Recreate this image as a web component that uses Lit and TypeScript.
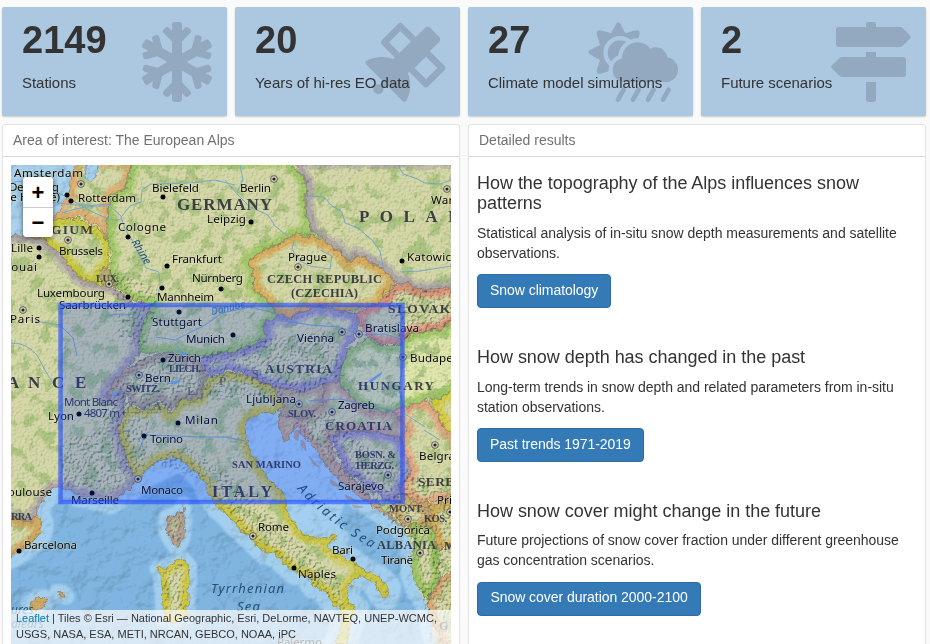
import { LitElement, html, svg, css } from "lit";
import { customElement } from "lit/decorators.js";

const ICONS: Record<string, { w: number; body: unknown }> = {
  snow: {
    w: 70,
    body: svg`<svg viewBox="0 0 448 512"><path d="M440.3 345.2l-33.8-19.5 26-7c8.2-2.2 13.1-10.7 10.9-18.9l-4-14.9c-2.2-8.2-10.7-13.1-18.9-10.9l-70.8 19-63.9-37 63.8-36.9 70.8 19c8.2 2.2 16.7-2.7 18.9-10.9l4-14.9c2.2-8.2-2.7-16.7-10.9-18.9l-26-7 33.8-19.5c7.4-4.3 9.9-13.7 5.7-21.1L430.4 119c-4.3-7.4-13.7-9.9-21.1-5.7l-33.8 19.5 7-26c2.2-8.2-2.7-16.7-10.9-18.9l-14.9-4c-8.2-2.2-16.7 2.7-18.9 10.9l-19 70.8-62.8 36.2v-77.5l53.7-53.7c6.2-6.2 6.2-16.4 0-22.6l-11.3-11.3c-6.2-6.2-16.4-6.2-22.6 0L256 56.4V16c0-8.8-7.2-16-16-16h-32c-8.8 0-16 7.2-16 16v40.4l-19.7-19.7c-6.2-6.2-16.4-6.2-22.6 0L138.3 48c-6.3 6.2-6.3 16.4 0 22.6l53.7 53.7v77.5l-62.8-36.2-19-70.8c-2.2-8.2-10.7-13.1-18.9-10.9l-14.9 4c-8.2 2.2-13.1 10.7-10.9 18.9l7 26-33.8-19.5c-7.4-4.3-16.8-1.7-21.1 5.7L2.1 145.7c-4.3 7.4-1.7 16.8 5.7 21.1l33.8 19.5-26 7c-8.3 2.2-13.2 10.7-11 19l4 14.9c2.2 8.2 10.7 13.1 18.9 10.9l70.8-19 63.8 36.9-63.8 36.9-70.8-19c-8.2-2.2-16.7 2.7-18.9 10.9l-4 14.9c-2.2 8.2 2.7 16.7 10.9 18.9l26 7-33.8 19.6c-7.4 4.3-9.9 13.7-5.7 21.1l15.5 26.8c4.3 7.4 13.7 9.9 21.1 5.7l33.8-19.5-7 26c-2.2 8.2 2.7 16.7 10.9 18.9l14.9 4c8.2 2.2 16.7-2.7 18.9-10.9l19-70.8 62.8-36.2v77.5l-53.7 53.7c-6.3 6.2-6.3 16.4 0 22.6l11.3 11.3c6.2 6.2 16.4 6.2 22.6 0l19.7-19.7V496c0 8.8 7.2 16 16 16h32c8.8 0 16-7.2 16-16v-40.4l19.7 19.7c6.2 6.2 16.4 6.2 22.6 0l11.3-11.3c6.2-6.2 6.2-16.4 0-22.6L256 387.7v-77.5l62.8 36.2 19 70.8c2.2 8.2 10.7 13.1 18.9 10.9l14.9-4c8.2-2.2 13.1-10.7 10.9-18.9l-7-26 33.8 19.5c7.4 4.3 16.8 1.7 21.1-5.7l15.5-26.8c4.3-7.3 1.8-16.8-5.6-21z"/></svg>`,
  },
  satellite: {
    w: 80,
    body: svg`<svg viewBox="0 0 240 240">
      <path d="M180 18Q188 11 196 18L222 44Q229 52 222 60L128 154L84 112Z"/>
      <path d="M106 13L154 61L106 109L58 61ZM183 90L231 138L183 186L135 138Z" fill="none" stroke="currentColor" stroke-width="20" stroke-linejoin="round"/>
      <path d="M3 117C32 101 68 102 90 114L128 152C140 180 136 214 125 235Q119 243 112 236L3 127Q-2 122 3 117Z"/>
      <circle cx="40" cy="202" r="15"/><path d="M38 195L65 168L75 178L48 205Z"/></svg>`,
  },
  weather: {
    w: 90,
    body: svg`<svg viewBox="0 0 270 240">
      <path d="M86 4Q91 -3 96 4L112 34L143 25Q156 24 155 34L148 66L120 160L62 148L36 156Q25 156 26 145L36 114L4 96Q-2 90 4 85L36 69L26 36Q25 25 36 25L69 34Z"/>
      <circle class="gap" cx="96" cy="92" r="50"/><circle cx="96" cy="92" r="37"/>
      <g class="halo"><circle cx="149" cy="108" r="47"/><circle cx="110" cy="144" r="36"/><circle cx="204" cy="110" r="34"/><circle cx="233" cy="143" r="37"/></g>
      <g><circle cx="149" cy="108" r="47"/><circle cx="110" cy="144" r="36"/><circle cx="204" cy="110" r="34"/><circle cx="233" cy="143" r="37"/><path d="M108 110H234V180H108Z"/></g>
      <path d="M107 203L90 233M152 203L135 233M197 203L180 233M242 203L225 233" fill="none" stroke="currentColor" stroke-width="14" stroke-linecap="round"/></svg>`,
  },
  signs: {
    w: 80,
    body: svg`<svg viewBox="0 0 240 240"><path d="M105 15V6Q105 0 111 0H129Q135 0 135 6V15H205Q211 15 215 19L238 41Q242 45 238 49L215 71Q211 75 205 75H24Q15 75 15 66V24Q15 15 24 15ZM105 90H135V105H216Q225 105 225 114V156Q225 165 216 165H35Q29 165 25 161L2 139Q-2 135 2 131L25 109Q29 105 35 105H105ZM105 180H135V232Q135 240 127 240H113Q105 240 105 232Z"/></svg>`,
  },
};

@customElement("value-box")
class ValueBox extends LitElement {
  static properties = { value: {}, caption: {}, icon: {} };
  declare value: string;
  declare caption: string;
  declare icon: string;
  static styles = css`
    :host { display: block; position: relative; box-sizing: border-box; height: 109px; padding: 11px 20px; border-radius: 2px; background: #acc7e0; box-shadow: 0 1px 2px rgba(0, 0, 0, 0.2); color: #333; overflow: hidden; }
    .value { position: relative; font-size: 38px; font-weight: 700; line-height: 44px; }
    .caption { position: relative; font-size: 15px; line-height: 20px; margin-top: 11px; white-space: nowrap; letter-spacing: -0.03px; }
    .icon { position: absolute; right: 15px; top: 15px; height: 80px; color: #92a9c0; }
    .icon svg { display: block; height: 80px; width: 100%; fill: currentColor; overflow: visible; }
    .icon .gap { fill: #acc7e0; }
    .icon .halo { fill: #acc7e0; stroke: #acc7e0; stroke-width: 24; }
  `;
  render() {
    const icon = ICONS[this.icon];
    return html`<div class="icon" style="width:${icon.w}px">${icon.body}</div>
      <div class="value">${this.value}</div>
      <div class="caption">${this.caption}</div>`;
  }
}

type Country = { id: string; band: string; pts: string };

const GERMANY_CZ = "292,165 300,173 307,183 305,200 308,217 312,232 307,238 297,233 280,243 258,253 247,262 253,270 253,287 268,302";
const ITALY_COAST =
  "137,480 147,470 160,460 177,457 190,467 203,480 208,493 217,507 225,513 238,527 252,540 265,553 275,555 288,567 295,573 308,577 313,587 325,592 332,603 340,610 342,627 334,644 347,644 350,628 357,608 348,603 347,590 355,578 365,577 375,585 382,597 387,598 389,587 380,577 365,570 352,560 335,553 327,545 337,538 332,535 322,538 305,535 292,520 287,507 282,490 268,478 253,457 248,443 245,427 250,418 260,413 276,414";
const COUNTRIES: Country[] = [
  { id: "fr", band: "#a69aa6", pts: "0,237 27,235 43,240 60,253 70,267 83,280 103,285 117,289 133,302 155,305 143,323 138,343 140,353 125,370 112,385 105,397 125,393 124,412 118,430 124,450 128,465 138,478 133,487 117,498 110,502 90,497 77,495 67,490 53,488 43,500 37,513 30,522 0,514" },
  { id: "es", band: "#d09d50", pts: "0,514 30,522 37,513 42,524 40,534 30,545 17,553 0,562" },
  { id: "nl", band: "#e0a566", pts: "75,160 132,160 130,170 128,183 123,190 115,193 108,200 108,217 107,240 100,228 80,216 50,222 68,195" },
  { id: "be", band: "#cbc829", pts: "27,234 50,222 67,218 80,218 100,230 110,243 108,267 100,273 103,285 83,280 70,267 60,253 43,240" },
  { id: "lu", band: "#b09f5e", pts: "104,268 112,273 117,287 103,286 100,277" },
  { id: "de", band: "#96c558", pts: `132,160 130,170 128,183 123,190 115,193 108,200 108,217 107,240 112,253 108,270 117,287 133,300 155,305 150,310 143,323 138,343 140,353 163,352 180,355 203,356 235,352 258,343 267,335 263,327 277,315 268,302 ${GERMANY_CZ.split(" ").reverse().join(" ")} 292,160` },
  { id: "pl", band: "#a49aa8", pts: "292,160 300,173 307,183 305,200 308,217 312,232 330,245 338,250 348,263 357,255 372,263 388,273 395,284 405,283 420,290 460,288 460,160" },
  { id: "cz", band: "#dba54d", pts: "247,262 258,253 280,243 297,233 307,238 312,234 330,245 338,250 348,263 357,255 372,263 388,273 395,284 385,293 380,302 372,307 345,312 320,306 300,312 290,318 277,314 268,302 253,287 253,270" },
  { id: "sk", band: "#dd8570", pts: "380,302 395,285 405,283 420,290 460,288 460,318 438,330 412,333 398,345 382,345 367,337 358,323 357,313" },
  { id: "at", band: "#948cbe", pts: "203,356 235,352 258,343 267,335 263,327 277,315 290,318 300,312 320,306 345,312 357,313 358,328 348,350 340,370 338,382 325,384 300,391 270,386 250,376 230,370 210,376 200,368" },
  { id: "ch", band: "#b29d7f", pts: "163,352 145,358 125,370 112,385 105,397 125,393 130,405 145,408 160,400 170,412 180,400 200,398 207,376 200,360 180,355" },
  { id: "it", band: "#cac22d", pts: `${ITALY_COAST} 285,405 270,386 250,376 230,372 207,378 200,398 180,400 170,414 160,402 145,410 130,407 124,412 118,430 124,450 130,468` },
  { id: "si", band: "#b59d80", pts: "270,386 300,391 325,384 322,405 303,418 278,415 285,405" },
  { id: "hr", band: "#c4a084", pts: "338,382 355,400 370,411 395,412 407,430 400,438 370,431 345,431 330,436 335,460 365,490 402,527 382,512 358,497 342,482 328,470 318,453 307,440 297,427 285,443 278,425 278,415 303,418 322,405 325,384" },
  { id: "hu", band: "#96c25c", pts: "348,350 367,338 382,346 398,346 412,334 438,330 460,318 460,385 440,398 425,400 400,408 395,412 370,411 355,400 338,382 340,370" },
  { id: "ro", band: "#d6cc2c", pts: "460,385 440,398 428,401 438,413 446,430 460,440" },
  { id: "ba", band: "#9a8cbf", pts: "330,436 345,431 370,431 400,438 405,455 411,470 400,490 394,506 370,490 345,470" },
  { id: "rs", band: "#e69a78", pts: "400,408 425,400 438,413 446,430 460,440 460,500 440,500 420,505 400,490 411,470 405,455 400,438 407,430 395,412" },
  { id: "me", band: "#c39c62", pts: "400,490 420,505 432,510 427,525 412,530 402,527 392,512" },
  { id: "xk", band: "#d9a54c", pts: "420,505 460,500 460,545 438,550 432,527 427,525 432,510" },
  { id: "al", band: "#90c052", pts: "410,522 432,527 438,550 440,577 428,600 417,586 412,573 413,547" },
  { id: "gr", band: "#d9a06a", pts: "428,600 440,577 460,570 460,650 445,650 428,612" },
  { id: "co", band: "#a8948f", pts: "183,503 185,520 183,537 178,550 170,540 165,530 167,517 181,512" },
  { id: "sd", band: "#cdc52c", pts: "157,568 167,567 182,557 190,567 188,603 187,617 173,623 163,620 162,590 160,577" },
  { id: "ml", band: "#cf9a55", pts: "28,603 38,597 47,597 45,607 37,611 30,607" },
  { id: "mn", band: "#cf9a55", pts: "56,592 63,592 67,597 60,596" },
];

const MAINLAND =
  "0,237 27,235 50,222 68,195 77,160 460,160 460,650 438,650 428,612 427,603 418,590 412,573 413,547 402,527 382,512 358,497 342,482 328,470 318,453 307,440 297,427 285,443 278,425 276,414 260,413 220,430 203,478 190,467 177,457 160,460 147,470 133,487 117,498 110,502 90,497 77,495 67,490 53,488 43,500 37,513 42,524 40,534 30,545 17,553 0,562";

/* x, y, text, rendered length */
type Label = [number, number, string, number];
const CITIES: Label[] = [
  [14, 177, "Amsterdam", 69], [78, 202, "Rotterdam", 58], [9, 191, "Den Haag", 50], [-7, 201, "(The Hague)", 67],
  [11, 252, "Lille", 22], [59, 255, "Brussels", 44], [2, 271, "Douai", 35], [152, 192, "Bielefeld", 47], [240, 192, "Berlin", 31],
  [118, 231, "Cologne", 48], [207, 223, "Leipzig", 39], [172, 263, "Frankfurt", 50], [192, 282, "Nürnberg", 51],
  [37, 297, "Luxembourg", 68], [157, 301, "Mannheim", 57], [59, 309, "Saarbrücken", 67], [288, 261, "Prague", 39],
  [431, 204, "Warsaw", 44], [407, 261, "Katowice", 51], [10, 323, "Paris", 30], [152, 326, "Stuttgart", 50],
  [186, 343, "Munich", 39], [297, 342, "Vienna", 37], [365, 332, "Bratislava", 54], [168, 362, "Zürich", 33],
  [145, 382, "Bern", 26], [410, 362, "Budapest", 53], [246, 403, "Ljubljana", 50], [338, 409, "Zagreb", 37],
  [48, 420, "Lyon", 26], [185, 424, "Milan", 33], [150, 443, "Torino", 33], [419, 460, "Belgrade", 50],
  [2, 496, "Toulouse", 50], [71, 504, "Marseille", 48], [141, 494, "Monaco", 42], [338, 490, "Sarajevo", 46],
  [24, 549, "Barcelona", 53], [258, 531, "Rome", 31], [332, 554, "Bari", 21], [298, 578, "Naples", 38],
  [376, 534, "Podgorica", 54], [381, 564, "Tiranë", 32], [437, 504, "Pristina", 42],
];
/* x, y, text, rendered length, font size */
const NAMES: [number, number, string, number, number][] = [
  [177, 210, "GERMANY", 95, 17], [359, 222, "POLAND", 124, 17], [51, 234, "GIUM", 42, 13.5], [96, 282, "LUX.", 23, 10.5],
  [267, 283, "CZECH REPUBLIC", 115, 12.5], [291, 297, "(CZECHIA)", 67, 12.5], [388, 313, "SLOVAKIA", 80, 13.5],
  [265, 373, "AUSTRIA", 67, 13], [358, 390, "HUNGARY", 76, 13], [169, 372, "LIECH.", 32, 10],
  [126, 392, "SWITZ.", 34, 10.5], [288, 417, "SLOV.", 28, 10.5], [325, 430, "CROATIA", 67, 13],
  [355, 458, "BOSN. &", 41, 10.5], [356, 469, "HERZG.", 38, 10.5], [232, 468, "SAN MARINO", 69, 10.5],
  [212, 497, "ITALY", 60, 16], [418, 486, "SERBIA", 52, 13.5], [389, 512, "MONT.", 35, 10.5], [424, 522, "KOS.", 23, 10.5],
  [377, 549, "ALBANIA", 59, 12.5], [444, 550, "MACED.", 50, 12], [11, 520, "RRA", 21, 10.5], [439, 630, "GREECE", 60, 12],
];
const DOTS = [[67, 195], [71, 201], [163, 197], [128, 237], [251, 222], [39, 248], [39, 257], [167, 266], [162, 288], [221, 289], [128, 297], [402, 261], [179, 312], [233, 335], [163, 360], [79, 414], [178, 423], [144, 436], [92, 493], [19, 551], [294, 568], [353, 559]];
const CAPITALS = [[81, 184], [68, 240], [274, 179], [447, 189], [298, 267], [109, 284], [23, 310], [342, 332], [359, 334], [403, 357], [139, 375], [299, 404], [332, 412], [435, 445], [388, 475], [138, 479], [253, 536], [408, 519], [420, 553], [450, 512]];
const RIVERS = [
  "M11 183Q30 175 75 202T122 216L130 206L141 202L142 190L151 184L190 183L215 180L235 185",
  "M48 201Q80 208 108 204L121 216Q124 230 132 240L146 268L159 272L160 285L156 305M62 213Q85 205 107 206",
  "M225 180L238 195L250 207L268 215L275 226L290 238M240 165L243 180L237 192",
  "M308 196L324 197L331 205L342 212L345 223L358 228L373 241L380 251L384 271M451 266L420 271L400 272",
  "M398 165L403 174L415 178L425 183L440 184L451 180M294 240L292 249L300 261L310 266L330 269L332 256L320 250",
  "M11 343Q25 342 37 355L46 372L56 388M35 321L60 325L73 338L77 356M105 317L115 314L145 315",
  "M156 337L175 340L205 325L222 313L250 307L275 313L287 321L310 325L340 327L360 335L385 334L402 340L404 356L399 390L405 414L425 427",
  "M139 450L145 435L176 436L200 437L225 437L245 441M398 414L390 410L340 399L308 401M424 430L440 440",
];

@customElement("alps-map")
class AlpsMap extends LitElement {
  static styles = css`
    :host { display: block; position: relative; height: 479px; overflow: hidden; background: #82b5de; }
    svg { display: block; width: 440px; height: 479px; }
    .city { font: 11.6px "Noto Sans", sans-serif; fill: #050505; paint-order: stroke; stroke: rgba(235, 238, 200, 0.4); stroke-width: 1.2px; }
    .name { font-family: "Liberation Serif", serif; font-weight: 700; fill: #3d3e43; }
    .alps { opacity: 0.6; font-size: 12px; }
    .water { font-family: "Noto Sans", sans-serif; font-style: italic; fill: #245079; }
    .peak { font: 11.5px "Noto Sans", sans-serif; fill: #333948; }
    .blend { mix-blend-mode: multiply; }
    .zoom { position: absolute; left: 12px; top: 12px; width: 30px; border-radius: 4px; background: #fff; box-shadow: 0 1px 5px rgba(0, 0, 0, 0.6); overflow: hidden; }
    .zoom button { display: block; width: 30px; height: 30px; padding: 0; border: 0; background: #fff; font: 700 22px/29px "Liberation Sans", Arial, sans-serif; color: #000; }
    .zoom button + button { border-top: 1px solid #ccc; }
    .credit { position: absolute; left: 0; right: 0; bottom: 0; box-sizing: border-box; height: 34px; padding: 1px 0 0 5px; background: rgba(255, 255, 255, 0.7); font: 11px/15.7px "Liberation Sans", Arial, sans-serif; color: #333; white-space: nowrap; }
    .credit a { color: #0078a8; }
  `;
  render() {
    return html`<svg viewBox="11 165 440 479">
        <defs>
          <filter id="rough" x="0" y="150" width="470" height="500" filterUnits="userSpaceOnUse" color-interpolation-filters="sRGB">
            <feTurbulence type="fractalNoise" baseFrequency="0.16" numOctaves="3" seed="8" />
            <feDisplacementMap in="SourceGraphic" scale="8" xChannelSelector="R" yChannelSelector="G" />
          </filter>
          <filter id="soft"><feGaussianBlur stdDeviation="1.1" /></filter>
          <filter id="relief" x="0" y="150" width="470" height="500" filterUnits="userSpaceOnUse" color-interpolation-filters="sRGB">
            <feTurbulence type="fractalNoise" baseFrequency="0.38" numOctaves="2" seed="3" result="n" />
            <feDiffuseLighting in="n" surfaceScale="3" diffuseConstant="1.3" lighting-color="#fff"><feDistantLight azimuth="225" elevation="52" /></feDiffuseLighting>
            <feComposite in2="SourceAlpha" operator="in" />
          </filter>
          <filter id="seabed" x="0" y="150" width="470" height="500" filterUnits="userSpaceOnUse" color-interpolation-filters="sRGB">
            <feTurbulence type="fractalNoise" baseFrequency="0.05" numOctaves="4" seed="12" />
            <feDiffuseLighting surfaceScale="6" diffuseConstant="1.2" lighting-color="#fff"><feDistantLight azimuth="225" elevation="58" /></feDiffuseLighting>
          </filter>
          <filter id="forest" x="0" y="150" width="470" height="500" filterUnits="userSpaceOnUse" color-interpolation-filters="sRGB">
            <feTurbulence type="fractalNoise" baseFrequency="0.07" numOctaves="4" seed="21" />
            <feColorMatrix values="0 0 0 0 0.68  0 0 0 0 0.77  0 0 0 0 0.51  9 0 0 0 -4.8" />
            <feComposite in2="SourceAlpha" operator="in" />
          </filter>
          ${COUNTRIES.map((c) => svg`<clipPath id="clip-${c.id}"><polygon points="${c.pts}"/></clipPath>`)}
        </defs>
        <rect x="0" y="150" width="470" height="500" fill="#7fb5e0" />
        <rect x="0" y="160" width="90" height="80" fill="#a6cfec" />
        <g fill="none" stroke="#acd6f3" stroke-width="24" stroke-linejoin="round" filter="url(#soft)" opacity=".8">
          <polygon points="${MAINLAND}" />
          <polygon points="${ITALY_COAST}" />
          ${COUNTRIES.slice(-4).map((c) => svg`<polygon points="${c.pts}" stroke-width="15"/>`)}
        </g>
        <path d="M245 410H300L350 490L330 540L290 520L265 480Z" fill="#a4cff0" filter="url(#soft)" />
        <rect class="blend" x="0" y="150" width="470" height="500" filter="url(#seabed)" opacity=".2" />
        <g filter="url(#rough)">
          <polygon points="${MAINLAND}" fill="#d4d8a6" />
          ${COUNTRIES.map((c) => svg`<polygon points="${c.pts}" fill="${c.id === "hu" ? "#dfe6ab" : "#d4d7a6"}"/>`)}
          <g filter="url(#forest)"><polygon points="${MAINLAND}" />${COUNTRIES.slice(-4).map((c) => svg`<polygon points="${c.pts}"/>`)}<polygon points="${COUNTRIES[11].pts}" /></g>
          ${COUNTRIES.map(
            (c) => svg`<g clip-path="url(#clip-${c.id})" fill="none" stroke="${c.band}" stroke-linejoin="round">
            <polygon points="${c.pts}" stroke-width="18" opacity=".4"/><polygon points="${c.pts}" stroke-width="11" opacity=".62"/><polygon points="${c.pts}" stroke="#77706c" stroke-width="1.8" opacity=".55"/></g>`
          )}
          <path d="M87 160H99L97 172L91 181L85 178Z" fill="#a6cfec" stroke="#6fa6d8" />
        </g>
        <g class="blend">
          <g filter="url(#relief)" opacity=".12"><polygon points="${MAINLAND}" /><polygon points="${COUNTRIES[11].pts}" />${COUNTRIES.slice(-4).map((c) => svg`<polygon points="${c.pts}"/>`)}</g>
          <g filter="url(#relief)" opacity=".32">
            <path d="M112 385L140 358L200 355L262 340L335 330L345 375L300 395L200 400L150 415L145 465L110 495L95 440Z" />
            <path d="M150 462L185 445L235 480L285 530L340 580L345 610L300 573L240 525L203 480Z" />
            <path d="M285 425L325 410L370 450L411 470L451 490L451 644H430L415 545L345 480L310 440Z" />
            <path d="M380 290L451 287V325L400 340ZM60 440L105 430L110 490L60 485ZM110 270L160 290L145 350L120 340Z" />
            <path d="M167 517L183 510L180 545L168 535ZM163 570L182 563L185 612L166 615Z" />
          </g>
        </g>
        <g fill="none" stroke="#6a9fd2" stroke-width="1" opacity=".85">${RIVERS.map((d) => svg`<path d="${d}"/>`)}</g>
        <g fill="#74abe0"><path d="M112 394Q120 388 127 391L120 391L113 397ZM175 350L188 353L184 355ZM368 381L382 372L381 375L370 383ZM166 384L184 378L176 384Z" /></g>
        <g fill="#bea188" stroke="#8c9aa5" stroke-width=".5"><path d="M295 431L299 430L298 441L294 438ZM301 440L305 443L306 451L301 445ZM309 456L319 467L314 465ZM330 479L343 488L332 485ZM345 495L360 502L347 499ZM352 505L363 507L355 508Z" /></g>
        ${NAMES.map(([x, y, t, w, s]) => svg`<text class="name" x="${x}" y="${y}" font-size="${s}" textLength="${w}">${t}</text>`)}
        <text class="name" x="7 28 52 75" y="388" font-size="17">ANCE</text>
        <text class="name alps" x="153 187 219 252" y="410 395 385 378">ALPS</text>
        <g class="peak"><text x="64" y="406" textLength="54">Mont Blanc</text><text x="84" y="417" textLength="36">4807 m</text><text x="121" y="416" font-size="9">+</text></g>
        <g class="water">
          <text font-size="11" transform="translate(131 242) rotate(58)">Rhine</text>
          <text font-size="10" transform="translate(212 315) rotate(-13)" fill="#4379ba">Danube</text>
          <text font-size="13" x="211" y="593" textLength="73">Tyrrhenian</text><text font-size="13" x="237" y="611" textLength="23">Sea</text>
          <path id="adriatic" d="M297 489Q330 525 375 550" fill="none" />
          <text font-size="13"><textPath href="#adriatic" textLength="96">Adriatic Sea</textPath></text>
        </g>
        ${CITIES.map(([x, y, t, w]) => svg`<text class="city" x="${x}" y="${y}" textLength="${w}">${t}</text>`)}
        <text class="city" x="277" y="646" textLength="45">Palermo</text>
        <g class="water" font-size="12"><text x="11" y="614">ures</text><text x="11" y="628">alears</text></g>
        ${DOTS.map(([x, y]) => svg`<circle cx="${x}" cy="${y}" r="2.5" fill="#050505"/>`)}
        ${CAPITALS.map(([x, y]) => svg`<circle cx="${x}" cy="${y}" r="3.4" fill="#d4d5b4" stroke="#444" stroke-width=".8"/><circle cx="${x}" cy="${y}" r="1.6" fill="#222"/>`)}
        <rect x="60.500" y="305" width="342" height="197" fill="#03f" fill-opacity=".21" stroke="#1f4bff" stroke-opacity=".6" stroke-width="4.500" />
      </svg>
      <div class="zoom"><button>+</button><button>−</button></div>
      <div class="credit"><a>Leaflet</a> | Tiles © Esri — National Geographic, Esri, DeLorme, NAVTEQ, UNEP-WCMC,<br />USGS, NASA, ESA, METI, NRCAN, GEBCO, NOAA, iPC</div>`;
  }
}

const BOXES = [
  { value: "2149", caption: "Stations", icon: "snow" },
  { value: "20", caption: "Years of hi-res EO data", icon: "satellite" },
  { value: "27", caption: "Climate model simulations", icon: "weather" },
  { value: "2", caption: "Future scenarios", icon: "signs" },
];
const RESULTS = [
  { title: "How the topography of the Alps influences snow patterns", text: "Statistical analysis of in-situ snow depth measurements and satellite observations.", action: "Snow climatology" },
  { title: "How snow depth has changed in the past", text: "Long-term trends in snow depth and related parameters from in-situ station observations.", action: "Past trends 1971-2019" },
  { title: "How snow cover might change in the future", text: "Future projections of snow cover fraction under different greenhouse gas concentration scenarios.", action: "Snow cover duration 2000-2100" },
];

@customElement("app-root")
class AppRoot extends LitElement {
  static styles = css`
    :host { display: block; box-sizing: border-box; width: 930px; height: 644px; padding: 7px 4px 0 2px; overflow: hidden; background: #fafafa; font: 14px/20px "Liberation Sans", Arial, sans-serif; color: #333; }
    .boxes { display: grid; grid-template-columns: repeat(4, 225px); column-gap: 8px; }
    .panels { display: grid; grid-template-columns: 458px 458px; column-gap: 8px; margin-top: 8px; }
    .panel { box-sizing: border-box; height: 540px; background: #fff; border: 1px solid #e2e2e2; border-radius: 3px; }
    .head { box-sizing: border-box; height: 32px; padding: 5px 10px; border-bottom: 1px solid #d8d8d8; color: #717171; font-size: 14px; }
    .map { padding: 8px; }
    .results { padding: 16px 20px 0 8px; }
    section { margin-bottom: 39px; }
    h4 { margin: 0 0 10px; font-size: 18px; line-height: 20px; font-weight: 400; letter-spacing: -0.03px; }
    p { margin: 0 0 11px; letter-spacing: -0.03px; }
    .btn { display: inline-block; box-sizing: border-box; height: 34px; padding: 5px 12px; border: 1px solid #2e6da4; border-radius: 4px; background: #337ab7; color: #fff; letter-spacing: -0.04px; }
    section:last-child h4 { margin-bottom: 9px; }
    section:last-child p { margin-bottom: 12px; }
    section:last-child .btn { padding: 4px 12.4px; }
  `;
  render() {
    return html`<div class="boxes">${BOXES.map((b) => html`<value-box .value=${b.value} .caption=${b.caption} .icon=${b.icon}></value-box>`)}</div>
      <div class="panels">
        <div class="panel"><div class="head">Area of interest: The European Alps</div><div class="map"><alps-map></alps-map></div></div>
        <div class="panel"><div class="head">Detailed results</div>
          <div class="results">${RESULTS.map((r) => html`<section><h4>${r.title}</h4><p>${r.text}</p><a class="btn">${r.action}</a></section>`)}</div>
        </div>
      </div>`;
  }
}
